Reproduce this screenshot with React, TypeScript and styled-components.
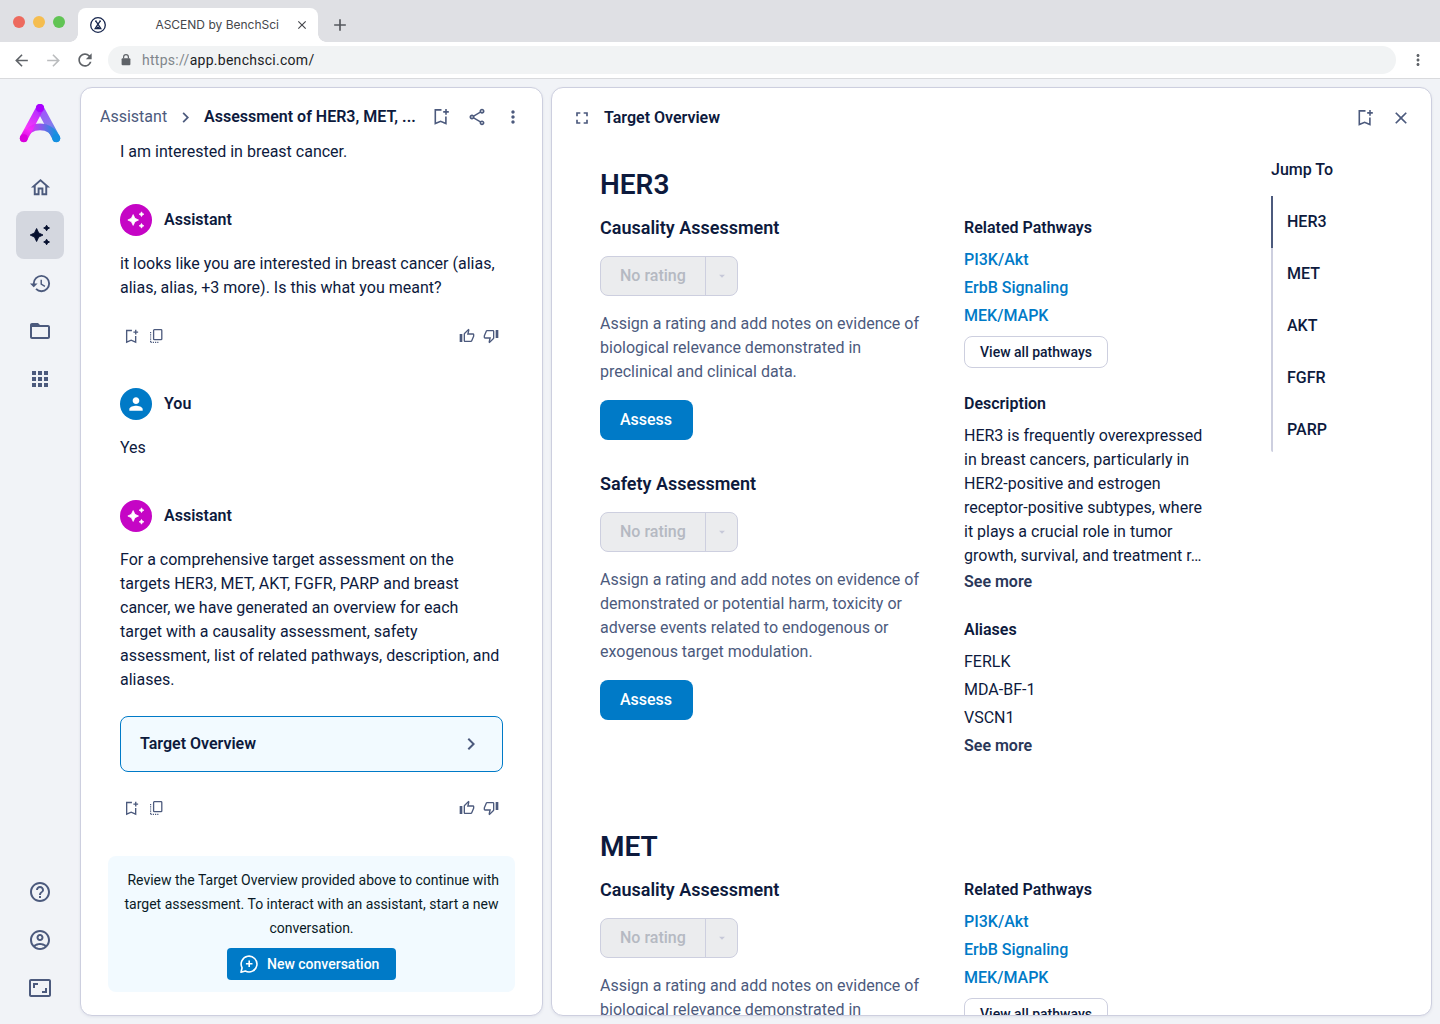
import React from "react";
import styled, { createGlobalStyle } from "styled-components";
import {
  MdOutlineHome,
  MdHistory,
  MdFolderOpen,
  MdApps,
  MdHelpOutline,
  MdOutlineAccountCircle,
  MdOutlineAspectRatio,
  MdOutlineShare,
  MdMoreVert,
  MdChevronRight,
  MdOutlineThumbUp,
  MdOutlineThumbDown,
  MdFullscreen,
  MdClose,
  MdPerson,
  MdArrowBack,
  MdArrowForward,
  MdRefresh,
  MdAdd,
  MdArrowDropDown,
} from "react-icons/md";

const color = {
  ink: "#0d1a3d",
  muted: "#4c5a7d",
  line: "#cdcfdf",
  page: "#f1f3f7",
  blue: "#007ac7",
  paleBlue: "#f2faff",
  magenta: "#c505c5",
};

const GlobalStyle = createGlobalStyle`
  *, *::before, *::after { box-sizing: border-box; }
  body {
    margin: 0;
    font-family: Roboto, sans-serif;
    font-size: 16px;
    line-height: 24px;
    color: ${color.ink};
    background: ${color.page};
  }
  h1, h2, h3, p, ul { margin: 0; padding: 0; }
  ul { list-style: none; }
  button { font-family: inherit; margin: 0; padding: 0; cursor: pointer; }
  svg { display: block; flex: none; }
`;

/* ---------- window chrome ---------- */

const Window = styled.div`
  display: flex;
  flex-direction: column;
  width: 1440px;
  height: 1024px;
  overflow: hidden;
`;

const TabStrip = styled.div`
  display: flex;
  height: 42px;
  flex: none;
  background: #dfe0e4;
`;

const TrafficLights = styled.div`
  display: flex;
  gap: 8px;
  width: 78px;
  padding: 16px 0 0 13px;
`;

const Light = styled.span<{ $fill: string }>`
  width: 12px;
  height: 12px;
  border-radius: 50%;
  background: ${(p) => p.$fill};
`;

const BrowserTab = styled.div`
  display: flex;
  align-items: center;
  position: relative;
  width: 240px;
  height: 34px;
  margin-top: 8px;
  padding: 0 9px 0 12px;
  border-radius: 8px 8px 0 0;
  background: #fff;
  color: #45474c;

  &::before,
  &::after {
    content: "";
    position: absolute;
    bottom: 0;
    width: 8px;
    height: 8px;
  }
  &::before {
    left: -8px;
    background: radial-gradient(circle at 0 0, transparent 7.5px, #fff 8px);
  }
  &::after {
    right: -8px;
    background: radial-gradient(circle at 100% 0, transparent 7.5px, #fff 8px);
  }
`;

const TabTitle = styled.span`
  flex: 1;
  padding-right: 16px;
  text-align: right;
  font-family: Inter, sans-serif;
  font-size: 12px;
  line-height: 16px;
`;

const NewTab = styled.div`
  display: flex;
  align-items: center;
  padding: 8px 0 0 12px;
  color: #55585d;
`;

const Toolbar = styled.div`
  display: flex;
  align-items: center;
  height: 37px;
  flex: none;
  padding: 0 13px 0 12px;
  border-bottom: 1px solid #d9dadd;
  background: #fff;
  color: #5f6368;
`;

const ToolbarButton = styled.span<{ $faint?: boolean }>`
  display: flex;
  justify-content: center;
  width: 18px;
  margin-right: 14px;
  color: ${(p) => (p.$faint ? "#babcbe" : "#5f6368")};
`;

const AddressBar = styled.div`
  display: flex;
  align-items: center;
  flex: 1;
  height: 28px;
  padding-left: 12px;
  border-radius: 14px;
  background: #f1f3f4;
  font-size: 14px;
  letter-spacing: 0.28px;
  color: #202124;
`;

const Protocol = styled.span`
  margin-left: 10px;
  color: #80868b;
`;

const ToolbarMenu = styled.span`
  margin-left: 13px;
`;

/* ---------- app shell ---------- */

const Shell = styled.div`
  display: flex;
  flex: 1;
  min-height: 0;
`;

const Sidebar = styled.nav`
  display: flex;
  flex-direction: column;
  align-items: center;
  width: 80px;
  padding: 24px 0 12px;
  color: ${color.muted};
`;

const NavItem = styled.a<{ $active?: boolean }>`
  display: flex;
  align-items: center;
  justify-content: center;
  width: 48px;
  height: 48px;
  border-radius: 8px;
  color: ${(p) => (p.$active ? "#050f2e" : color.muted)};
  background: ${(p) => (p.$active ? "#d4d7df" : "transparent")};
`;

const NavGroup = styled.div`
  display: flex;
  flex-direction: column;
`;

const TopNav = styled(NavGroup)`
  margin-top: 18px;
  flex: 1;
`;

const Panels = styled.main`
  display: flex;
  gap: 8px;
  flex: 1;
  min-width: 0;
  padding: 8px 8px 8px 0;
`;

const Panel = styled.section<{ $width?: number }>`
  display: flex;
  flex-direction: column;
  flex: ${(p) => (p.$width ? `0 0 ${p.$width}px` : 1)};
  min-width: 0;
  overflow: hidden;
  border: 1px solid ${color.line};
  border-radius: 12px;
  background: #fff;
  box-shadow: 0 1px 3px rgba(30, 40, 90, 0.08);
`;

const PanelHeader = styled.header<{ $inset: string; $height: number }>`
  display: flex;
  align-items: center;
  flex: none;
  height: ${(p) => p.$height}px;
  padding: ${(p) => p.$inset};
  color: ${color.muted};
`;

const PanelTitle = styled.h1<{ $offset: number }>`
  flex: 1;
  min-width: 0;
  margin-left: ${(p) => p.$offset}px;
  font-size: 16px;
  font-weight: 600;
  line-height: 24px;
  color: ${color.ink};
  white-space: nowrap;
`;

const HeaderActions = styled.div`
  display: flex;
  align-items: center;
  gap: 16px;
`;

const Crumb = styled.span`
  margin-right: 8px;
`;

/* ---------- conversation ---------- */

const Thread = styled.div`
  display: flex;
  flex-direction: column;
  flex: 1;
  padding: 0 39px;
`;

const Message = styled.article<{ $before: number }>`
  display: flex;
  flex-direction: column;
  margin-top: ${(p) => p.$before}px;
`;

const Author = styled.div`
  display: flex;
  align-items: center;
  gap: 12px;
  height: 32px;
  margin-bottom: 16px;
  font-weight: 600;
`;

const Avatar = styled.span<{ $fill: string }>`
  display: flex;
  align-items: center;
  justify-content: center;
  width: 32px;
  height: 32px;
  border-radius: 50%;
  background: ${(p) => p.$fill};
  color: #fff;
`;

const Body = styled.p`
  white-space: pre-line;
`;

const Feedback = styled.div`
  display: flex;
  justify-content: space-between;
  align-items: center;
  height: 24px;
  margin-top: 24px;
  padding: 0 4px 0 3px;
  color: ${color.muted};
`;

const FeedbackSide = styled.div`
  display: flex;
  align-items: center;
  gap: 8px;
`;

const OverviewCard = styled.a`
  display: flex;
  align-items: center;
  justify-content: space-between;
  height: 56px;
  margin-top: 24px;
  padding: 0 19px;
  border: 1px solid ${color.blue};
  border-radius: 8px;
  background: ${color.paleBlue};
  font-weight: 600;

  svg {
    color: ${color.muted};
  }
`;

const Notice = styled.div`
  display: flex;
  flex-direction: column;
  align-items: center;
  height: 136px;
  margin: 36px -12px 0;
  padding: 12px;
  border-radius: 8px;
  background: ${color.paleBlue};
  color: #0a1a26;
  font-size: 14px;
  line-height: 24px;
  text-align: center;
  white-space: pre;
`;

const NewConversation = styled.button`
  display: flex;
  align-items: center;
  gap: 8px;
  width: 169px;
  height: 32px;
  margin-top: 8px;
  padding-left: 12px;
  border: 0;
  border-radius: 4px;
  background: ${color.blue};
  color: #fff;
  font-size: 14px;
  font-weight: 500;
`;

/* ---------- target overview ---------- */

const Overview = styled.div`
  display: flex;
  flex: 1;
  min-height: 0;
  padding-left: 48px;
`;

const Targets = styled.div`
  width: 671px;
  padding-top: 21px;
  overflow-y: auto;
  scrollbar-width: none;
`;

const Target = styled.section`
  height: 662px;
`;

const TargetName = styled.h2`
  font-size: 28px;
  font-weight: 600;
  line-height: 36px;
`;

const Columns = styled.div`
  display: flex;
  gap: 40px;
  margin-top: 13px;
`;

const Ratings = styled.div`
  width: 324px;
`;

const Assessment = styled.div`
  display: flex;
  flex-direction: column;
  align-items: flex-start;
  margin-bottom: 32px;
`;

const AssessmentTitle = styled.h3`
  font-size: 18px;
  font-weight: 600;
  line-height: 24px;
`;

const RatingSelect = styled.div`
  display: flex;
  width: 138px;
  height: 40px;
  margin: 16px 0;
  border: 1px solid ${color.line};
  border-radius: 8px;
  background: #ebecee;
  color: #b5b9c2;
  font-weight: 500;
  line-height: 38px;
`;

const RatingValue = styled.span`
  flex: 1;
  padding-left: 19px;
  border-right: 1px solid ${color.line};
`;

const RatingToggle = styled.span`
  display: flex;
  align-items: center;
  justify-content: center;
  width: 31px;
  color: #c6c8d8;
`;

const Hint = styled.p`
  color: ${color.muted};
  white-space: pre-line;
`;

const AssessButton = styled.button`
  width: 93px;
  height: 40px;
  margin-top: 16px;
  padding: 0 1px 2px 0;
  border: 0;
  border-radius: 8px;
  background: ${color.blue};
  color: #fff;
  font-size: 16px;
  font-weight: 500;
`;

const Facts = styled.div`
  flex: 1;
`;

const FactTitle = styled.h3`
  margin-bottom: 6px;
  font-size: 16px;
  font-weight: 600;
  line-height: 24px;
`;

const FactList = styled.ul`
  line-height: 28px;
`;

const PathwayLink = styled.a`
  color: ${color.blue};
  font-weight: 500;
`;

const OutlineButton = styled.button`
  display: block;
  width: 144px;
  height: 32px;
  margin: 6px 0 24px;
  border: 1px solid ${color.line};
  border-radius: 8px;
  background: #fff;
  color: ${color.ink};
  font-size: 14px;
  font-weight: 500;
`;

const Description = styled.p`
  margin-top: 8px;
  white-space: pre-line;
`;

const SeeMore = styled.a<{ $after?: number }>`
  display: block;
  margin-bottom: ${(p) => p.$after ?? 0}px;
  font-weight: 600;
  line-height: 28px;
  color: #2a3759;
`;

const JumpTo = styled.aside`
  display: flex;
  flex-direction: column;
  padding-top: 12px;
  font-weight: 500;
`;

const JumpList = styled.ul`
  height: 256px;
  margin-top: 14px;
  overflow: hidden;
  border-bottom-left-radius: 2px;
`;

const JumpItem = styled.li<{ $current: boolean }>`
  height: 52px;
  padding-left: 14px;
  border-left: 2px solid ${(p) => (p.$current ? color.muted : color.line)};
  line-height: 52px;
`;

/* ---------- drawings ---------- */

const Logo = () => (
  <svg width="42" height="42" viewBox="0 0 42 42" fill="none" strokeLinecap="round">
    <defs>
      <linearGradient id="left" x1="21" y1="5" x2="5" y2="36" gradientUnits="userSpaceOnUse">
        <stop stopColor="#a51cff" />
        <stop offset="0.7" stopColor="#fa28fa" />
        <stop offset="1" stopColor="#d60adb" />
      </linearGradient>
      <linearGradient id="right" x1="21" y1="5" x2="37" y2="36" gradientUnits="userSpaceOnUse">
        <stop stopColor="#a84cff" />
        <stop offset="0.55" stopColor="#8878ee" />
        <stop offset="1" stopColor="#1c92e0" />
      </linearGradient>
      <linearGradient id="arc" x1="6" y1="30" x2="36" y2="30" gradientUnits="userSpaceOnUse">
        <stop stopColor="#f92bff" />
        <stop offset="0.4" stopColor="#aa49ee" />
        <stop offset="1" stopColor="#1a91df" />
      </linearGradient>
    </defs>
    <path d="M21 5 37.3 35.2" stroke="url(#right)" strokeWidth="7.8" />
    <path d="M4.8 35.2C10 20.2 32 20.2 37.3 35.2" stroke="url(#arc)" strokeWidth="6.8" />
    <path d="M21 5 4.8 35.2" stroke="url(#left)" strokeWidth="7.8" strokeOpacity="0.92" />
    <circle cx="21" cy="4.9" r="4" fill="#aa00ff" />
    <circle cx="4.8" cy="35.2" r="3.9" fill="#d900dc" />
    <circle cx="37.2" cy="35.2" r="3.9" fill="#148fe0" />
  </svg>
);

const Sparkles = ({ size = 24 }: { size?: number }) => (
  <svg width={size} height={size} viewBox="0 0 24 24" fill="currentColor" stroke="currentColor" strokeLinejoin="round">
    <path d="M8.6 5.5 10.7 9.9 15 12 10.7 14.1 8.6 18.5 6.5 14.1 2.2 12 6.5 9.9Z" strokeWidth="0.9" />
    <path d="M18.6 2.2 19.6 4.1 21.5 5 19.6 5.9 18.6 7.8 17.6 5.9 15.7 5 17.6 4.1Z" strokeWidth="0.9" />
    <path d="M18.6 16.2 19.6 18.1 21.5 19 19.6 19.9 18.6 21.8 17.6 19.9 15.7 19 17.6 18.1Z" strokeWidth="0.9" />
  </svg>
);

const BookmarkAdd = ({ size = 20 }: { size?: number }) => (
  <svg width={size} height={size} viewBox="0 0 20 20" fill="none" stroke="currentColor" strokeWidth="1.6">
    <path d="M10.5 2.9H4.3V16.6L9.6 14.3 14.9 16.6V9.4" />
    <path d="M15 2.1V7.7M12.2 4.9H17.8" />
  </svg>
);

const CopyLayers = () => (
  <svg width="16" height="16" viewBox="0 0 16 16" fill="none" stroke="currentColor">
    <rect x="5.6" y="1.7" width="8.2" height="10" rx="0.8" strokeWidth="1.3" />
    <path d="M2.6 4V14.4" strokeWidth="1.2" strokeDasharray="1.2 1" />
    <path d="M2.6 14.4H11" strokeWidth="1.2" strokeDasharray="1.2 1" />
  </svg>
);

const Padlock = () => (
  <svg width="12" height="14" viewBox="0 0 12 14" fill="none">
    <rect x="1.6" y="5.2" width="8.8" height="7" rx="1" fill="#5f6368" />
    <path d="M3.6 5.4V4A2.4 2.4 0 0 1 8.4 4V5.4" stroke="#5f6368" strokeWidth="1.2" />
  </svg>
);

const ChatPlus = () => (
  <svg width="20" height="20" viewBox="0 0 20 20" fill="none" stroke="currentColor" strokeWidth="1.6">
    <path d="M2 18.2 3.1 13.8A7.9 7.9 0 1 1 6.3 17Z" strokeLinejoin="round" />
    <path d="M10.2 6.5V13.1M6.9 9.8H13.5" />
  </svg>
);

const Favicon = () => (
  <svg width="16" height="16" viewBox="0 0 16 16" fill="none" stroke="#17264d" strokeWidth="1.3">
    <circle cx="8" cy="8" r="7.3" />
    <path d="M5 4.2H6.8M9.2 4.2H11M6 4.4 8 7.2 10 4.4M8 7.2 5.2 11.6H10.8L8 7.2" />
    <path d="M6.6 10.4H9.4" />
  </svg>
);

/* ---------- content ---------- */

const pathways = ["PI3K/Akt", "ErbB Signaling", "MEK/MAPK"];
const aliases = ["FERLK", "MDA-BF-1", "VSCN1"];
const targets = ["HER3", "MET", "AKT", "FGFR", "PARP"];

const assessments = [
  {
    title: "Causality Assessment",
    hint: "Assign a rating and add notes on evidence of\nbiological relevance demonstrated in\npreclinical and clinical data.",
  },
  {
    title: "Safety Assessment",
    hint: "Assign a rating and add notes on evidence of\ndemonstrated or potential harm, toxicity or\nadverse events related to endogenous or\nexogenous target modulation.",
  },
];

const FeedbackBar = () => (
  <Feedback>
    <FeedbackSide>
      <BookmarkAdd size={17} />
      <CopyLayers />
    </FeedbackSide>
    <FeedbackSide>
      <MdOutlineThumbUp size={16} />
      <MdOutlineThumbDown size={16} />
    </FeedbackSide>
  </Feedback>
);

const AssistantAuthor = () => (
  <Author>
    <Avatar $fill={color.magenta}>
      <Sparkles size={20} />
    </Avatar>
    Assistant
  </Author>
);

const TargetSection = ({ name }: { name: string }) => (
  <Target>
    <TargetName>{name}</TargetName>
    <Columns>
      <Ratings>
        {assessments.map((a) => (
          <Assessment key={a.title}>
            <AssessmentTitle>{a.title}</AssessmentTitle>
            <RatingSelect>
              <RatingValue>No rating</RatingValue>
              <RatingToggle>
                <MdArrowDropDown size={14} />
              </RatingToggle>
            </RatingSelect>
            <Hint>{a.hint}</Hint>
            <AssessButton>Assess</AssessButton>
          </Assessment>
        ))}
      </Ratings>
      <Facts>
        <FactTitle>Related Pathways</FactTitle>
        <FactList>
          {pathways.map((p) => (
            <li key={p}>
              <PathwayLink>{p}</PathwayLink>
            </li>
          ))}
        </FactList>
        <OutlineButton>View all pathways</OutlineButton>
        <FactTitle>Description</FactTitle>
        <Description>
          {"HER3 is frequently overexpressed\nin breast cancers, particularly in\nHER2-positive and estrogen\nreceptor-positive subtypes, where\nit plays a crucial role in tumor\ngrowth, survival, and treatment r…"}
        </Description>
        <SeeMore $after={22}>See more</SeeMore>
        <FactTitle>Aliases</FactTitle>
        <FactList>
          {aliases.map((a) => (
            <li key={a}>{a}</li>
          ))}
        </FactList>
        <SeeMore>See more</SeeMore>
      </Facts>
    </Columns>
  </Target>
);

export default function App() {
  return (
    <Window>
      <GlobalStyle />
      <TabStrip>
        <TrafficLights>
          <Light $fill="#ed6a5e" />
          <Light $fill="#f5bd4f" />
          <Light $fill="#61c454" />
        </TrafficLights>
        <BrowserTab>
          <Favicon />
          <TabTitle>ASCEND by BenchSci</TabTitle>
          <MdClose size={14} />
        </BrowserTab>
        <NewTab>
          <MdAdd size={20} />
        </NewTab>
      </TabStrip>
      <Toolbar>
        <ToolbarButton>
          <MdArrowBack size={19} />
        </ToolbarButton>
        <ToolbarButton $faint>
          <MdArrowForward size={19} />
        </ToolbarButton>
        <ToolbarButton>
          <MdRefresh size={20} />
        </ToolbarButton>
        <AddressBar>
          <Padlock />
          <Protocol>https://</Protocol>app.benchsci.com/
        </AddressBar>
        <ToolbarMenu>
          <MdMoreVert size={18} />
        </ToolbarMenu>
      </Toolbar>

      <Shell>
        <Sidebar>
          <Logo />
          <TopNav>
            <NavItem>
              <MdOutlineHome size={23} />
            </NavItem>
            <NavItem $active>
              <Sparkles />
            </NavItem>
            <NavItem>
              <MdHistory size={23} />
            </NavItem>
            <NavItem>
              <MdFolderOpen size={24} />
            </NavItem>
            <NavItem>
              <MdApps size={24} />
            </NavItem>
          </TopNav>
          <NavGroup>
            <NavItem>
              <MdHelpOutline size={24} />
            </NavItem>
            <NavItem>
              <MdOutlineAccountCircle size={24} />
            </NavItem>
            <NavItem>
              <MdOutlineAspectRatio size={24} />
            </NavItem>
          </NavGroup>
        </Sidebar>

        <Panels>
          <Panel $width={463}>
            <PanelHeader $height={52} $inset="6px 19px 0 19px">
              <Crumb>Assistant</Crumb>
              <MdChevronRight size={21} />
              <PanelTitle $offset={8}>Assessment of HER3, MET, ...</PanelTitle>
              <HeaderActions>
                <BookmarkAdd />
                <MdOutlineShare size={20} />
                <MdMoreVert size={20} />
              </HeaderActions>
            </PanelHeader>
            <Thread>
              <Body>I am interested in breast cancer.</Body>
              <Message $before={40}>
                <AssistantAuthor />
                <Body>
                  {"it looks like you are interested in breast cancer (alias,\nalias, alias, +3 more). Is this what you meant?"}
                </Body>
                <FeedbackBar />
              </Message>
              <Message $before={40}>
                <Author>
                  <Avatar $fill={color.blue}>
                    <MdPerson size={20} />
                  </Avatar>
                  You
                </Author>
                <Body>Yes</Body>
              </Message>
              <Message $before={40}>
                <AssistantAuthor />
                <Body>
                  {"For a comprehensive target assessment on the\ntargets HER3, MET, AKT, FGFR, PARP and breast\ncancer, we have generated an overview for each\ntarget with a causality assessment, safety\nassessment, list of related pathways, description, and\naliases."}
                </Body>
                <OverviewCard>
                  Target Overview
                  <MdChevronRight size={24} />
                </OverviewCard>
                <FeedbackBar />
              </Message>
              <Notice>
                {" Review the Target Overview provided above to continue with\ntarget assessment. To interact with an assistant, start a new\nconversation."}
                <NewConversation>
                  <ChatPlus />
                  New conversation
                </NewConversation>
              </Notice>
            </Thread>
          </Panel>

          <Panel>
            <PanelHeader $height={58} $inset="2px 20px 0 20px">
              <MdFullscreen size={20} />
              <PanelTitle $offset={12}>Target Overview</PanelTitle>
              <HeaderActions>
                <BookmarkAdd />
                <MdClose size={20} />
              </HeaderActions>
            </PanelHeader>
            <Overview>
              <Targets>
                <TargetSection name="HER3" />
                <TargetSection name="MET" />
              </Targets>
              <JumpTo>
                Jump To
                <JumpList>
                  {targets.map((t, i) => (
                    <JumpItem key={t} $current={i === 0}>
                      {t}
                    </JumpItem>
                  ))}
                </JumpList>
              </JumpTo>
            </Overview>
          </Panel>
        </Panels>
      </Shell>
    </Window>
  );
}
